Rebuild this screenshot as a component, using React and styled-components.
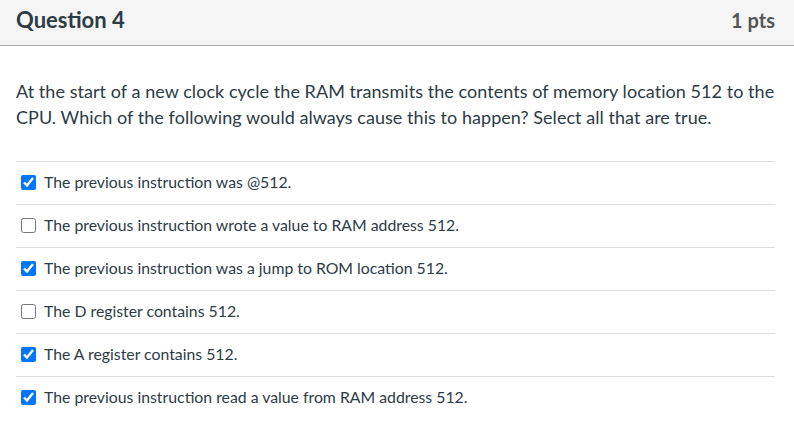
import React from 'react'
import styled, { createGlobalStyle } from 'styled-components'

const GlobalStyle = createGlobalStyle`
  body {
    margin: 0;
    background: #ffffff;
    font-family: Lato, "Liberation Sans", sans-serif;
    color: #2d3b45;
  }
`

const answers = [
  { id: 1, label: 'The previous instruction was @512.', checked: true },
  { id: 2, label: 'The previous instruction wrote a value to RAM address 512.', checked: false },
  { id: 3, label: 'The previous instruction was a jump to ROM location 512.', checked: true },
  { id: 4, label: 'The D register contains 512.', checked: false },
  { id: 5, label: 'The A register contains 512.', checked: true },
  { id: 6, label: 'The previous instruction read a value from RAM address 512.', checked: true },
]

export default function App() {
  return (
    <Page>
      <GlobalStyle />
      <Header>
        <Title>Question 4</Title>
        <Points>1 pts</Points>
      </Header>
      <Body>
        <QuestionText>
          At the start of a new clock cycle the RAM transmits the contents of memory location 512 to the
          CPU. Which of the following would always cause this to happen? Select all that are true.
        </QuestionText>
        <AnswerList>
          {answers.map(item => (
            <AnswerRow key={item.id}>
              <Check type="checkbox" defaultChecked={item.checked} />
              <AnswerLabel>{item.label}</AnswerLabel>
            </AnswerRow>
          ))}
        </AnswerList>
      </Body>
    </Page>
  )
}

const Page = styled.div`
  width: 794px;
  min-height: 441px;
  background: #fff;
`

const Header = styled.div`
  height: 46px;
  box-sizing: border-box;
  display: flex;
  align-items: center;
  justify-content: space-between;
  padding: 0 19px 6px 16px;
  background: #f5f5f5;
  border-bottom: 1px solid #adadad;
`

const Title = styled.div`
  font-size: 22px;
  font-weight: 700;
  color: #2d3b45;
`

const Points = styled.div`
  font-size: 20px;
  font-weight: 700;
  color: #555;
`

const Body = styled.div`
  padding: 32px 19px 0 16px;
`

const QuestionText = styled.div`
  font-size: 18px;
  letter-spacing: 0.05px;
  line-height: 26px;
  color: #2d3b45;
  margin-bottom: 31px;
`

const AnswerList = styled.div`
  display: flex;
  flex-direction: column;
`

const AnswerRow = styled.label`
  display: flex;
  align-items: center;
  height: 43px;
  box-sizing: border-box;
  border-top: 1px solid #dcdfe2;
  padding: 0 0 4px 5px;
`

const Check = styled.input`
  width: 15px;
  height: 15px;
  margin: 3px 8px 0 0;
`

const AnswerLabel = styled.span`
  font-size: 15.8px;
  color: #2d3b45;
`
